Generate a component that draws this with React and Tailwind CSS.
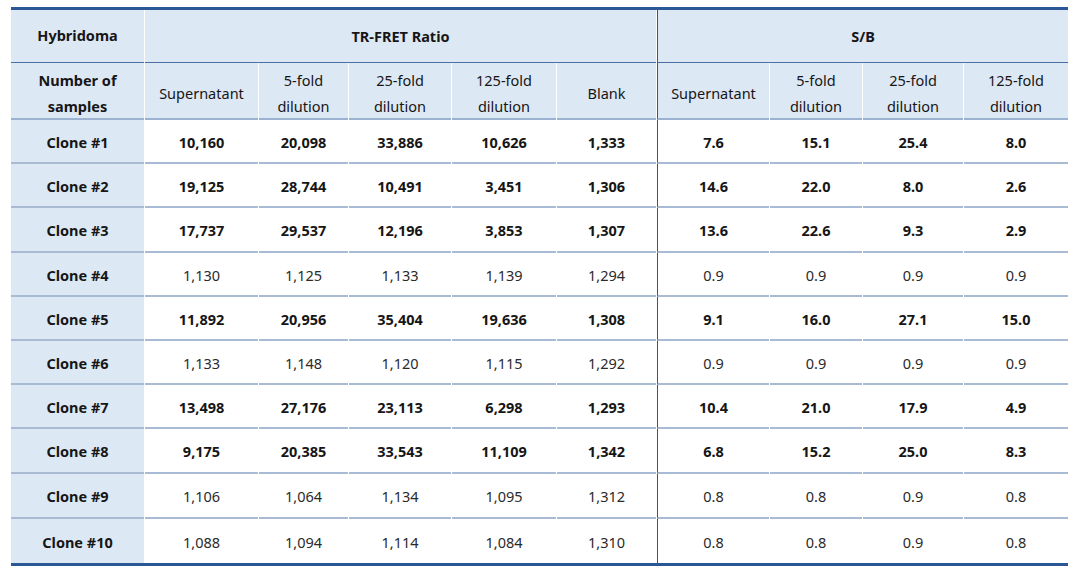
import React from "react";

const rows = [
  { name: "Clone #1", bold: true, v: ["10,160", "20,098", "33,886", "10,626", "1,333", "7.6", "15.1", "25.4", "8.0"], h: "h-[44px]" },
  { name: "Clone #2", bold: true, v: ["19,125", "28,744", "10,491", "3,451", "1,306", "14.6", "22.0", "8.0", "2.6"], h: "h-[44px]" },
  { name: "Clone #3", bold: true, v: ["17,737", "29,537", "12,196", "3,853", "1,307", "13.6", "22.6", "9.3", "2.9"], h: "h-[45px]" },
  { name: "Clone #4", bold: false, v: ["1,130", "1,125", "1,133", "1,139", "1,294", "0.9", "0.9", "0.9", "0.9"], h: "h-[44px]" },
  { name: "Clone #5", bold: true, v: ["11,892", "20,956", "35,404", "19,636", "1,308", "9.1", "16.0", "27.1", "15.0"], h: "h-[44px]" },
  { name: "Clone #6", bold: false, v: ["1,133", "1,148", "1,120", "1,115", "1,292", "0.9", "0.9", "0.9", "0.9"], h: "h-[44px]" },
  { name: "Clone #7", bold: true, v: ["13,498", "27,176", "23,113", "6,298", "1,293", "10.4", "21.0", "17.9", "4.9"], h: "h-[44px]" },
  { name: "Clone #8", bold: true, v: ["9,175", "20,385", "33,543", "11,109", "1,342", "6.8", "15.2", "25.0", "8.3"], h: "h-[45px]" },
  { name: "Clone #9", bold: false, v: ["1,106", "1,064", "1,134", "1,095", "1,312", "0.8", "0.8", "0.9", "0.8"], h: "h-[45px]" },
  { name: "Clone #10", bold: false, v: ["1,088", "1,094", "1,114", "1,084", "1,310", "0.8", "0.8", "0.9", "0.8"], h: "h-[44px]" },
];

const subHeads = [
  ["Supernatant"],
  ["5-fold", "dilution"],
  ["25-fold", "dilution"],
  ["125-fold", "dilution"],
  ["Blank"],
  ["Supernatant"],
  ["5-fold", "dilution"],
  ["25-fold", "dilution"],
  ["125-fold", "dilution"],
];

export default function App() {
  return (
    <div
      className="w-[1080px] h-[576px] bg-white pt-[7px] pl-[11px] text-[#161616]"
      style={{ fontFamily: '"Noto Sans", "Open Sans", sans-serif' }}
    >
      <div className="w-[1057px] border-t-[3px] border-b-[3px] border-[#2b5797] bg-white">
        <div className="grid grid-cols-[133px_113px_89px_102px_104px_99px_112px_92px_100px_104px] gap-x-px text-[14.5px]">
          {/* header row 1 */}
          <div className="h-[53px] bg-[#dde8f5] border-b border-[#4a6fa5] flex items-center justify-center font-bold">
            Hybridoma
          </div>
          <div className="col-span-5 h-[53px] bg-[#dde8f5] border-b border-[#4a6fa5] flex items-center justify-center font-bold pt-[2px]">
            TR-FRET Ratio
          </div>
          <div className="col-span-4 h-[53px] bg-[#dde8f5] border-b border-[#4a6fa5] border-l border-l-[#2b5797] flex items-center justify-center font-bold pt-[2px]">
            S/B
          </div>

          {/* header row 2 */}
          <div className="h-[57px] bg-[#dde8f5] border-b-2 border-[#9bb2d0] flex flex-col items-center justify-center font-bold leading-[26px] pt-[5px]">
            <span>Number of</span>
            <span>samples</span>
          </div>
          {subHeads.map((lines, i) => (
            <div
              key={i}
              className={
                "h-[57px] bg-[#dde8f5] border-b-2 border-[#9bb2d0] flex flex-col items-center justify-center leading-[26px] pt-[5px]" +
                (i === 5 ? " border-l border-l-[#2b5797]" : "")
              }
            >
              {lines.map((l) => (
                <span key={l}>{l}</span>
              ))}
            </div>
          ))}

          {/* data rows */}
          {rows.map((r, ri) => (
            <React.Fragment key={r.name}>
              <div
                className={
                  r.h +
                  " bg-[#dde8f5] flex items-center justify-center font-bold pt-[3px]" +
                  (ri < rows.length - 1 ? " border-b-2 border-[#a9bbd4]" : "")
                }
              >
                {r.name}
              </div>
              {r.v.map((val, ci) => (
                <div
                  key={ci}
                  className={
                    r.h +
                    " flex items-center justify-center pt-[3px]" +
                    (r.bold ? " font-bold" : " text-[#2a2a2a]") +
                    (ri < rows.length - 1 ? " border-b-2 border-[#a9bbd4]" : "") +
                    (ci === 5 ? " border-l border-l-[#2b5797]" : "")
                  }
                >
                  {val}
                </div>
              ))}
            </React.Fragment>
          ))}
        </div>
      </div>
    </div>
  );
}
